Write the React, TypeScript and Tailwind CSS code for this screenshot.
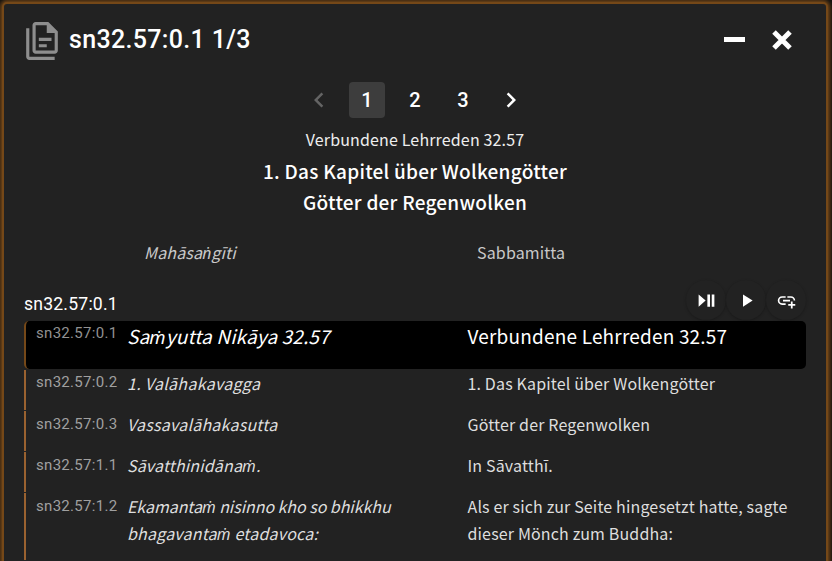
import React from "react";

const sans = "font-['Noto_Sans_CJK_SC','Noto_Sans',sans-serif]";

const rows = [
  { id: "sn32.57:0.2", pali: [["1. Valāhakavagga", "tracking-[0.3px]"]], de: ["1. Das Kapitel über Wolkengötter"] },
  { id: "sn32.57:0.3", pali: [["Vassavalāhakasutta", "tracking-[0.23px]"]], de: ["Götter der Regenwolken"] },
  { id: "sn32.57:1.1", pali: [["Sāvatthinidānaṁ.", "tracking-[0.15px]"]], de: ["In Sāvatthī."] },
  {
    id: "sn32.57:1.2",
    pali: [
      ["Ekamantaṁ nisinno kho so bhikkhu", "tracking-[-0.05px]"],
      ["bhagavantaṁ etadavoca:", "tracking-[0.2px]"],
    ],
    de: ["Als er sich zur Seite hingesetzt hatte, sagte", "dieser Mönch zum Buddha:"],
  },
];

// The CJK family has no dotted nasals, so those letters come from Noto Sans.
function Pali({ text }: { text: string }) {
  return (
    <>
      {text.split(/([ṁṅ])/).map((part, i) =>
        /[ṁṅ]/.test(part) ? (
          <span key={i} className="font-['Noto_Sans',sans-serif] text-[0.98em] leading-none">
            {part}
          </span>
        ) : (
          part
        ),
      )}
    </>
  );
}

function Icon({ d, size, className = "" }: { d: string; size: number; className?: string }) {
  return (
    <svg viewBox="0 0 24 24" width={size} height={size} fill="currentColor" className={className}>
      <path d={d} />
    </svg>
  );
}

function RoundButton({ d, size }: { d: string; size: number }) {
  return (
    <button className="flex h-10 w-10 items-center justify-center rounded-full bg-[#222222] text-white shadow-[0_1px_3px_rgba(0,0,0,0.25)]">
      <Icon d={d} size={size} />
    </button>
  );
}

export default function App() {
  return (
    <div className="h-[561px] w-[832px] overflow-hidden bg-[#101010] pl-[2px] pt-[2px] font-[Roboto,sans-serif] text-white">
      <main className="h-[580px] w-[826px] rounded-[5px] border-2 border-[#754818] bg-[#222222] pl-5 pr-5 shadow-[0_0_4px_2px_#754818]">
        <header className="flex h-[71px] items-center">
          <Icon
            className="-ml-px mr-px mt-[2px] text-[#8e8e8e]"
            size={38}
            d="M16 0H8C6.9 0 6 .9 6 2V18C6 19.1 6.9 20 8 20H20C21.1 20 22 19.1 22 18V6L16 0M20 18H8V2H15V7H20V18M4 4V22H20V24H4C2.9 24 2 23.1 2 22V4H4M10 10V12H18V10H10M10 14V16H15V14H10Z"
          />
          <h1 className="ml-[7px] text-[25px] font-medium leading-8 tracking-[0.33px]">sn32.57:0.1 1/3</h1>
          <div className="ml-auto flex items-center gap-6 pr-[13px]">
            <span className="h-[5px] w-[21px] bg-white" />
            <svg width="26" height="26" viewBox="0 0 26 26" className="-mr-0.5 stroke-white">
              <path d="M5 5 21 21M21 5 5 21" strokeWidth="5" />
            </svg>
          </div>
        </header>
        <nav className="mt-[7px] flex h-9 items-center justify-center gap-3 text-xl font-medium">
          <span className="flex w-9 justify-center text-[#646464]">
            <Icon size={30} d="M15.41 16.58 10.83 12l4.58-4.59L14 6l-6 6 6 6 1.41-1.42Z" />
          </span>
          <span className="flex h-9 w-9 items-center justify-center rounded bg-[#3d3d3d]">1</span>
          <span className="w-9 text-center">2</span>
          <span className="w-9 text-center">3</span>
          <span className="flex w-9 justify-center">
            <Icon size={30} d="M8.59 16.58 13.17 12 8.59 7.41 10 6l6 6-6 6-1.41-1.42Z" />
          </span>
        </nav>
        <div className={`${sans} pt-[8px] text-center`}>
          <p className="text-base leading-[27px] tracking-[0.15px] text-[#eeeeee]">Verbundene Lehrreden 32.57</p>
          <h2 className="mt-[2px] text-[19px] font-medium leading-[31px] tracking-[0.25px]">1. Das Kapitel über Wolkengötter</h2>
          <h2 className="text-[19px] font-medium leading-[31px] tracking-[0.25px]">Götter der Regenwolken</h2>
        </div>
        <div className={`${sans} mt-[22px] flex h-[27px] text-base leading-[27px] tracking-[0.15px] text-[#c9c9c9]`}>
          <span className="ml-[120px] w-[333px] italic">
            <Pali text="Mahāsaṅgīti" />
          </span>
          <span>Sabbamitta</span>
        </div>
        <div className="mt-[14px] flex h-[41px] items-start justify-between">
          <span className="pt-[14px] text-[17.6px] leading-5 tracking-[0.2px]">sn32.57:0.1</span>
          <div className="flex">
            <RoundButton size={21} d="M3 5V19L11 12M13 19H16V5H13M18 5V19H21V5" />
            <RoundButton size={21} d="M8 5.14v14l11-7-11-7Z" />
            <RoundButton
              size={21}
              d="M7 7H11V8.9H7A3.1 3.1 0 0 0 7 15.1H11V17H7A5 5 0 0 1 7 7M17 7A5 5 0 0 1 22 12H20.1A3.1 3.1 0 0 0 17 8.9H13V7H17M8 11H16V13H8V11M17 13H19V16H22V18H19V21H17V18H14V16H17V13Z"
            />
          </div>
        </div>
        <section className="w-[782px]">
          <article className="mb-px flex h-12 rounded-[5px] border-l-2 border-[#754818] bg-black pl-[10px]">
            <span className="w-[91px] pt-[2px] text-[15px] leading-5 tracking-[0.3px] text-[#929292]">sn32.57:0.1</span>
            <span className={`${sans} w-[340.5px] text-[19px] italic leading-[30px] tracking-[0.13px]`}>
              <Pali text="Saṁyutta Nikāya 32.57" />
            </span>
            <span className={`${sans} text-[19px] leading-[30px] tracking-[0.19px]`}>Verbundene Lehrreden 32.57</span>
          </article>
          {rows.map((r, i) => (
            <article key={r.id} className="mb-px flex min-h-10 border-l-2 border-[#9a6230] pl-[10px]">
              <span
                className={`w-[91px] text-[15px] leading-5 tracking-[0.3px] text-[#a0a0a0] ${i === 0 ? "pt-[2px]" : "pt-[3px]"}`}
              >
                {r.id}
              </span>
              <div className={`${sans} w-[340.5px] whitespace-nowrap pb-[13px] text-base italic leading-[27px] text-[#dedede]`}>
                {r.pali.map(([t, tracking]) => (
                  <p key={t} className={tracking}>
                    <Pali text={t} />
                  </p>
                ))}
              </div>
              <div className={`${sans} whitespace-nowrap text-base leading-[27px] tracking-[0.15px] text-[#dedede]`}>
                {r.de.map((t) => (
                  <p key={t}>{t}</p>
                ))}
              </div>
            </article>
          ))}
        </section>
      </main>
    </div>
  );
}
